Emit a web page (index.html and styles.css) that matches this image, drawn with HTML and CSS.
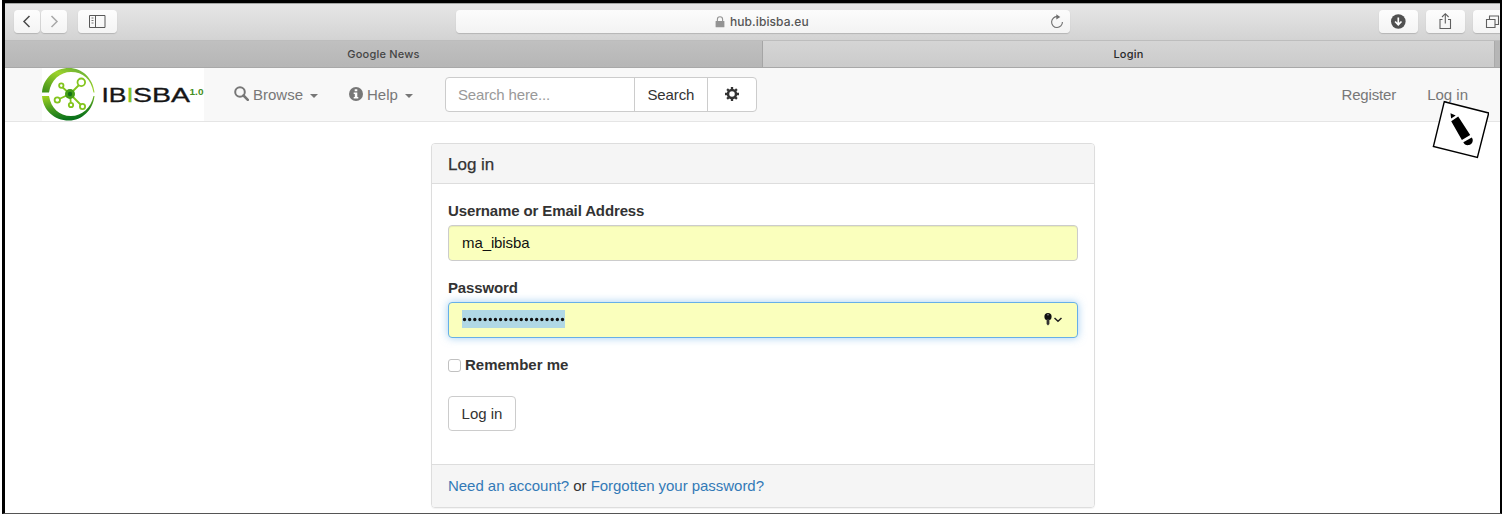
FILE: index.html
```html
<!DOCTYPE html>
<html lang="en">
<head>
<meta charset="utf-8">
<title>Login</title>
<link rel="stylesheet" href="styles.css">
</head>
<body>
<div class="window">
  <header class="toolbar">
    <div class="tool back"><svg width="26" height="23" viewBox="0 0 26 23"><path d="M15.500 6l-5.500 5.500 5.500 5.500" fill="none" stroke="#4a4a4a" stroke-width="1.500"/></svg></div>
    <div class="tool forward"><svg width="26" height="23" viewBox="0 0 26 23"><path d="M10.500 6l5.500 5.500-5.500 5.500" fill="none" stroke="#a8a8a8" stroke-width="1.500"/></svg></div>
    <div class="tool sidebar"><svg width="39" height="23" viewBox="0 0 39 23"><path d="M11.500 5.500h15.500v12h-15.500zM17.500 5.500v12" fill="none" stroke="#585858"/><path d="M13.500 8h2M13.500 10.500h2M13.500 13h2" stroke="#777"/></svg></div>
    <div class="address">
      <svg class="lock" width="10" height="12" viewBox="0 0 10 12"><path d="M2.400 6V3.300a2.600 2.600 0 0 1 5.200 0V6" fill="none" stroke="#939393" stroke-width="1.100"/><rect x=".6" y="5" width="8.800" height="6.300" rx=".6" fill="#939393"/></svg>
      <span class="url">hub.ibisba.eu</span>
      <svg class="reload" width="14" height="15" viewBox="0 0 14 15"><path d="M7.500 2.700a5.400 5.400 0 1 0 4.900 5.200" fill="none" stroke="#6d6d6d" stroke-width="1.100"/><path d="M6.300.2l4 2.700-4 2.500z" fill="#6d6d6d"/></svg>
    </div>
    <div class="tool download"><svg width="38" height="23" viewBox="0 0 38 23"><circle cx="19.300" cy="11.500" r="7.300" fill="#505050"/><path d="M19.300 7.500v7M16.100 11.500l3.200 3.300 3.200-3.300" fill="none" stroke="#fff" stroke-width="1.700"/></svg></div>
    <div class="tool share"><svg width="38" height="23" viewBox="0 0 38 23"><path d="M16.500 9.500h-2.500v9h10.500v-9H22M19.300 13.500V4M16 7l3.300-3.300L22.600 7" fill="none" stroke="#5f5f5f" stroke-width="1.100"/></svg></div>
    <div class="tool tabs-button"><svg width="27" height="23" viewBox="0 0 27 23"><path d="M13.500 9.500h8.500v8h-8.500zM16.500 9.500v-3.500h9v8.500h-3.500" fill="none" stroke="#5f5f5f" stroke-width="1.100"/></svg></div>
  </header>
  <div class="tabs">
    <div class="tab"><span>Google News</span></div>
    <div class="tab active"><span>Login</span></div>
    <div class="tab-end"></div>
  </div>
  <nav class="navbar">
    <svg class="logo" width="162" height="53" viewBox="0 0 162 53">
      <defs><linearGradient id="ring" x1="0" y1="0" x2=".35" y2="1"><stop offset="0" stop-color="#a2d421"/><stop offset=".55" stop-color="#45991e"/><stop offset="1" stop-color="#08701a"/></linearGradient>
      <linearGradient id="ring-top" x1="0" y1="1" x2="1" y2="0"><stop offset="0" stop-color="#398c18"/><stop offset=".55" stop-color="#9dd32b"/><stop offset="1" stop-color="#4f9b3c"/></linearGradient></defs>
      <rect width="162" height="53" fill="#fff"/>
      <path d="M0 24.500C1 10 13 0 27 0c13 0 24 10 25.500 24.500h-1C49 11 41 4 29 4 18 4 9 12 7 24.500z" fill="url(#ring-top)"/>
      <path d="M0 28h7c2 12 10 20 22 20 11 0 20-8 22.500-20h1C51 42 40 52.500 27 52.500 12 52.500 1 42 0 28z" fill="url(#ring)"/>
      <g stroke="#83c51d" stroke-width="1.800" fill="#fff"><path d="M28 26l11-11M28 26l-9-8M28 26L15 32M28 26l1 11M28 26l12 12"/><circle cx="39.300" cy="14.300" r="3.800"/><circle cx="19.300" cy="17.600" r="2.200"/><circle cx="15.300" cy="32" r="2.700"/><circle cx="29" cy="37" r="2.200"/><circle cx="40.500" cy="38.500" r="2.600"/></g>
      <circle cx="28" cy="26" r="5" fill="#459f18"/><circle cx="28" cy="26" r="2.200" fill="#187019"/>
      <g class="logo-word"><text x="59.500" y="34" textLength="25" lengthAdjust="spacingAndGlyphs">IB</text><text x="84.500" y="34" class="logo-green" textLength="7" lengthAdjust="spacingAndGlyphs">I</text><text x="91" y="34" textLength="57" lengthAdjust="spacingAndGlyphs">SBA</text></g>
      <text x="147.500" y="26.500" class="logo-version" textLength="14" lengthAdjust="spacingAndGlyphs">1.0</text>
    </svg>
    <a class="menu browse"><svg width="15" height="15" viewBox="0 0 15 15"><circle cx="6" cy="6" r="4.800" fill="none" stroke="#777" stroke-width="2"/><path d="M9.500 9.500l4.300 4.300" stroke="#777" stroke-width="2.500" stroke-linecap="round"/></svg><span>Browse</span><i class="caret"></i></a>
    <a class="menu help"><svg width="14" height="14" viewBox="0 0 14 14"><circle cx="7" cy="7" r="7" fill="#777"/><path d="M5.700 2.200h2.600v2H5.700zM4.700 5.500h3.600v4.500h1v1.500H4.700V10h1.100V7H4.700z" fill="#fff"/></svg><span>Help</span><i class="caret"></i></a>
    <div class="search"><div class="query">Search here...</div><div class="go">Search</div><div class="gear"><svg width="14" height="14" viewBox="-7 -7 14 14"><circle r="4" fill="none" stroke="#333" stroke-width="2.500"/><path d="M0-7v2.500M0 7V4.500M-7 0h2.500M7 0H4.500M-4.900-4.900l1.700 1.700M4.900 4.900L3.200 3.200M-4.900 4.900l1.700-1.700M4.900-4.900L3.200-3.200" stroke="#333" stroke-width="2.300"/></svg></div></div>
    <a class="register">Register</a>
    <a class="login-link">Log in</a>
  </nav>
  <main class="panel">
    <h1 class="panel-heading">Log in</h1>
    <div class="panel-body">
      <label class="label user-label">Username or Email Address</label>
      <div class="field user"><span>ma_ibisba</span></div>
      <label class="label pass-label">Password</label>
      <div class="field password">
        <span class="selection"><svg width="103" height="18" viewBox="0 0 103 18"><path d="M2.500 9.500h98.500" stroke="#111" stroke-width="3.400" stroke-linecap="round" stroke-dasharray="0 5.158"/></svg></span>
        <svg class="key" width="20" height="15" viewBox="0 0 20 15"><circle cx="4" cy="4.700" r="3.600" fill="#111"/><path d="M2.600 7h2.800v5L4 13.500 2.600 12z" fill="#333"/><circle cx="4" cy="2.800" r=".8" fill="#999"/><path d="M10.500 6l3.500 3.200L17.500 6" fill="none" stroke="#222" stroke-width="1.500"/></svg>
      </div>
      <label class="remember"><i class="checkbox"></i><span>Remember me</span></label>
      <div class="submit"><span>Log in</span></div>
    </div>
    <footer class="panel-footer"><a>Need an account?</a> or <a>Forgotten your password?</a></footer>
  </main>
  <svg class="pencil" width="58" height="60" viewBox="0 0 58 60"><path d="M13.300 2.700l44.400 11.300-11.300 44.500-44-11z" fill="#fff" stroke="#000" stroke-width="1.400"/><path d="M19.500 14.300l5.200 2.100-4.600 3zM20.200 22.200l7-4.700 12 18.600-8.300 5z"/><path d="M32.300 43.200l8.500-4.800c2.200 3 .4 7-3 7.700-2.500.5-4.500-.7-5.500-2.900z"/></svg>
</div>
</body>
</html>
```
FILE: styles.css
```css
* { box-sizing: border-box; }
body { margin: 0; background: #fff; color: #333; font: 15px/21px "Liberation Sans", Arial, sans-serif; }
svg { display: block; flex: none; }
a { color: inherit; white-space: nowrap; }
.window { position: relative; width: 1500px; height: 514px; margin-left: 2px; border: 3px solid #000; border-right-width: 2px; border-bottom: 1px solid #555; overflow: hidden; display: flex; flex-direction: column; }
.window::before { content: ""; position: absolute; left: -3px; top: -3px; width: 1500px; height: 1px; background: #555b55; }
.toolbar { height: 38px; flex: none; display: flex; align-items: flex-start; padding: 6px 0 0 9px; background: linear-gradient(#e6e6e6, #d3d3d3); border-bottom: 1px solid #bdbdbd; border-top: 1px solid #a3a5a3; }
.tool { height: 23px; border-radius: 4px; background: linear-gradient(#fdfdfd, #f4f4f4); box-shadow: 0 1px 1px #b5b5b5; flex: none; overflow: hidden; }
.back { width: 26px; }
.forward { width: 26px; margin-left: 1px; }
.sidebar { width: 39px; margin-left: 11px; }
.address { width: 614px; height: 23px; flex: none; margin-left: 339px; border-radius: 4px; display: flex; align-items: center; background: linear-gradient(#fcfcfc, #f3f3f3); box-shadow: 0 1px 1px #b5b5b5; padding: 0 6px 0 259px; }
.url { margin-left: 5px; font: 500 12px/20px Inter, sans-serif; letter-spacing: .08px; color: #555; }
.reload { margin-left: auto; }
.download { width: 39px; margin-left: 309px; }
.share { width: 39px; margin-left: 8px; }
.tabs-button { width: 31px; margin-left: 8px; border-radius: 4px 0 0 4px; }
.tabs { height: 27px; flex: none; display: flex; background: #b9b9b9; border-bottom: 1px solid #a8a8a8; font: 500 11px/26px Inter, sans-serif; color: #454545; letter-spacing: .2px; }
.tab { width: 758px; text-align: center; background: linear-gradient(#c0c0c0, #b6b6b6); border-right: 1px solid #a5a5a5; }
.active { width: 732px; background: linear-gradient(#d5d5d5, #cbcbcb); color: #292929; border-right-color: #aaa; }
.tab-end { flex: 1; background: #b6b6b6; }
.navbar { height: 54px; flex: none; background: #f8f8f8; border-bottom: 1px solid #e5e5e5; display: flex; align-items: center; color: #777; padding-left: 37px; }
.logo-word { font: 19.500px "Liberation Sans", sans-serif; fill: #161616; stroke: #161616; stroke-width: .3px; }
.logo-word .logo-green { fill: #83c51d; stroke: #83c51d; }
.logo-version { font: bold 9.500px "Liberation Sans", sans-serif; fill: #448e22; }
.menu { display: flex; align-items: center; }
.menu svg { margin-right: 4px; margin-top: -2px; }
.browse { margin-left: 30px; }
.help { margin-left: 31px; }
.caret { border: 4px solid transparent; border-top-color: #777; border-bottom: 0; margin: 3px 0 0 7px; }
.search { width: 312px; height: 35px; margin-left: 32px; border: 1px solid #ccc; border-radius: 4px; background: #fff; display: flex; line-height: 33px; }
.query { width: 188px; padding-left: 12px; color: #999; letter-spacing: -.15px; }
.go { width: 74px; text-align: center; color: #333; border: solid #ccc; border-width: 0 1px; letter-spacing: -.1px; }
.gear { flex: 1; display: flex; align-items: center; justify-content: center; padding-bottom: 2px; }
.register { margin-left: auto; letter-spacing: -.15px; }
.login-link { margin: 0 32px 0 31px; }
.panel { width: 664px; height: 365px; margin: 21px 0 0 426px; border: 1px solid #ddd; border-radius: 4px; box-shadow: 0 1px 1px rgba(0,0,0,.05); display: flex; flex-direction: column; flex: none; overflow: hidden; }
.panel-heading { margin: 0; height: 40px; padding: 1px 16px 0; background: #f5f5f5; border-bottom: 1px solid #ddd; font-size: 17px; line-height: 40px; font-weight: normal; -webkit-text-stroke: .25px #333; }
.panel-body { flex: 1; padding: 16px; display: flex; flex-direction: column; align-items: flex-start; }
.label, .remember { font-weight: bold; line-height: 21px; }
.label { letter-spacing: -.13px; }
.field { width: 630px; height: 36px; margin-top: 4px; border: 1px solid #ccc; border-radius: 4px; background: #faffbd; display: flex; align-items: center; padding: 0 13px; color: #111; box-shadow: inset 0 1px 1px rgba(0,0,0,.075); flex: none; }
.user span { margin-top: -2px; letter-spacing: -.1px; }
.pass-label { margin-top: 16px; }
.password { border-color: #66afe9; box-shadow: 0 0 8px rgba(102,175,233,.6); }
.selection { background: #b0d8e5; margin-top: -2px; }
.key { margin-left: auto; margin-top: -1px; }
.remember { display: flex; align-items: center; margin-top: 16px; }
.checkbox { width: 13px; height: 13px; border: 1px solid #c1c1c1; border-radius: 3px; background: #fff; margin: 1px 4px 0 0; }
.submit { width: 68px; height: 35px; line-height: 33px; margin-top: 21px; border: 1px solid #ccc; border-radius: 4px; text-align: center; }
.panel-footer { height: 43px; background: #f5f5f5; border-top: 1px solid #ddd; padding-left: 16px; line-height: 41px; letter-spacing: -.04px; }
.panel-footer a { color: #337ab7; }
.pencil { position: absolute; left: 1426px; top: 96px; }
```
